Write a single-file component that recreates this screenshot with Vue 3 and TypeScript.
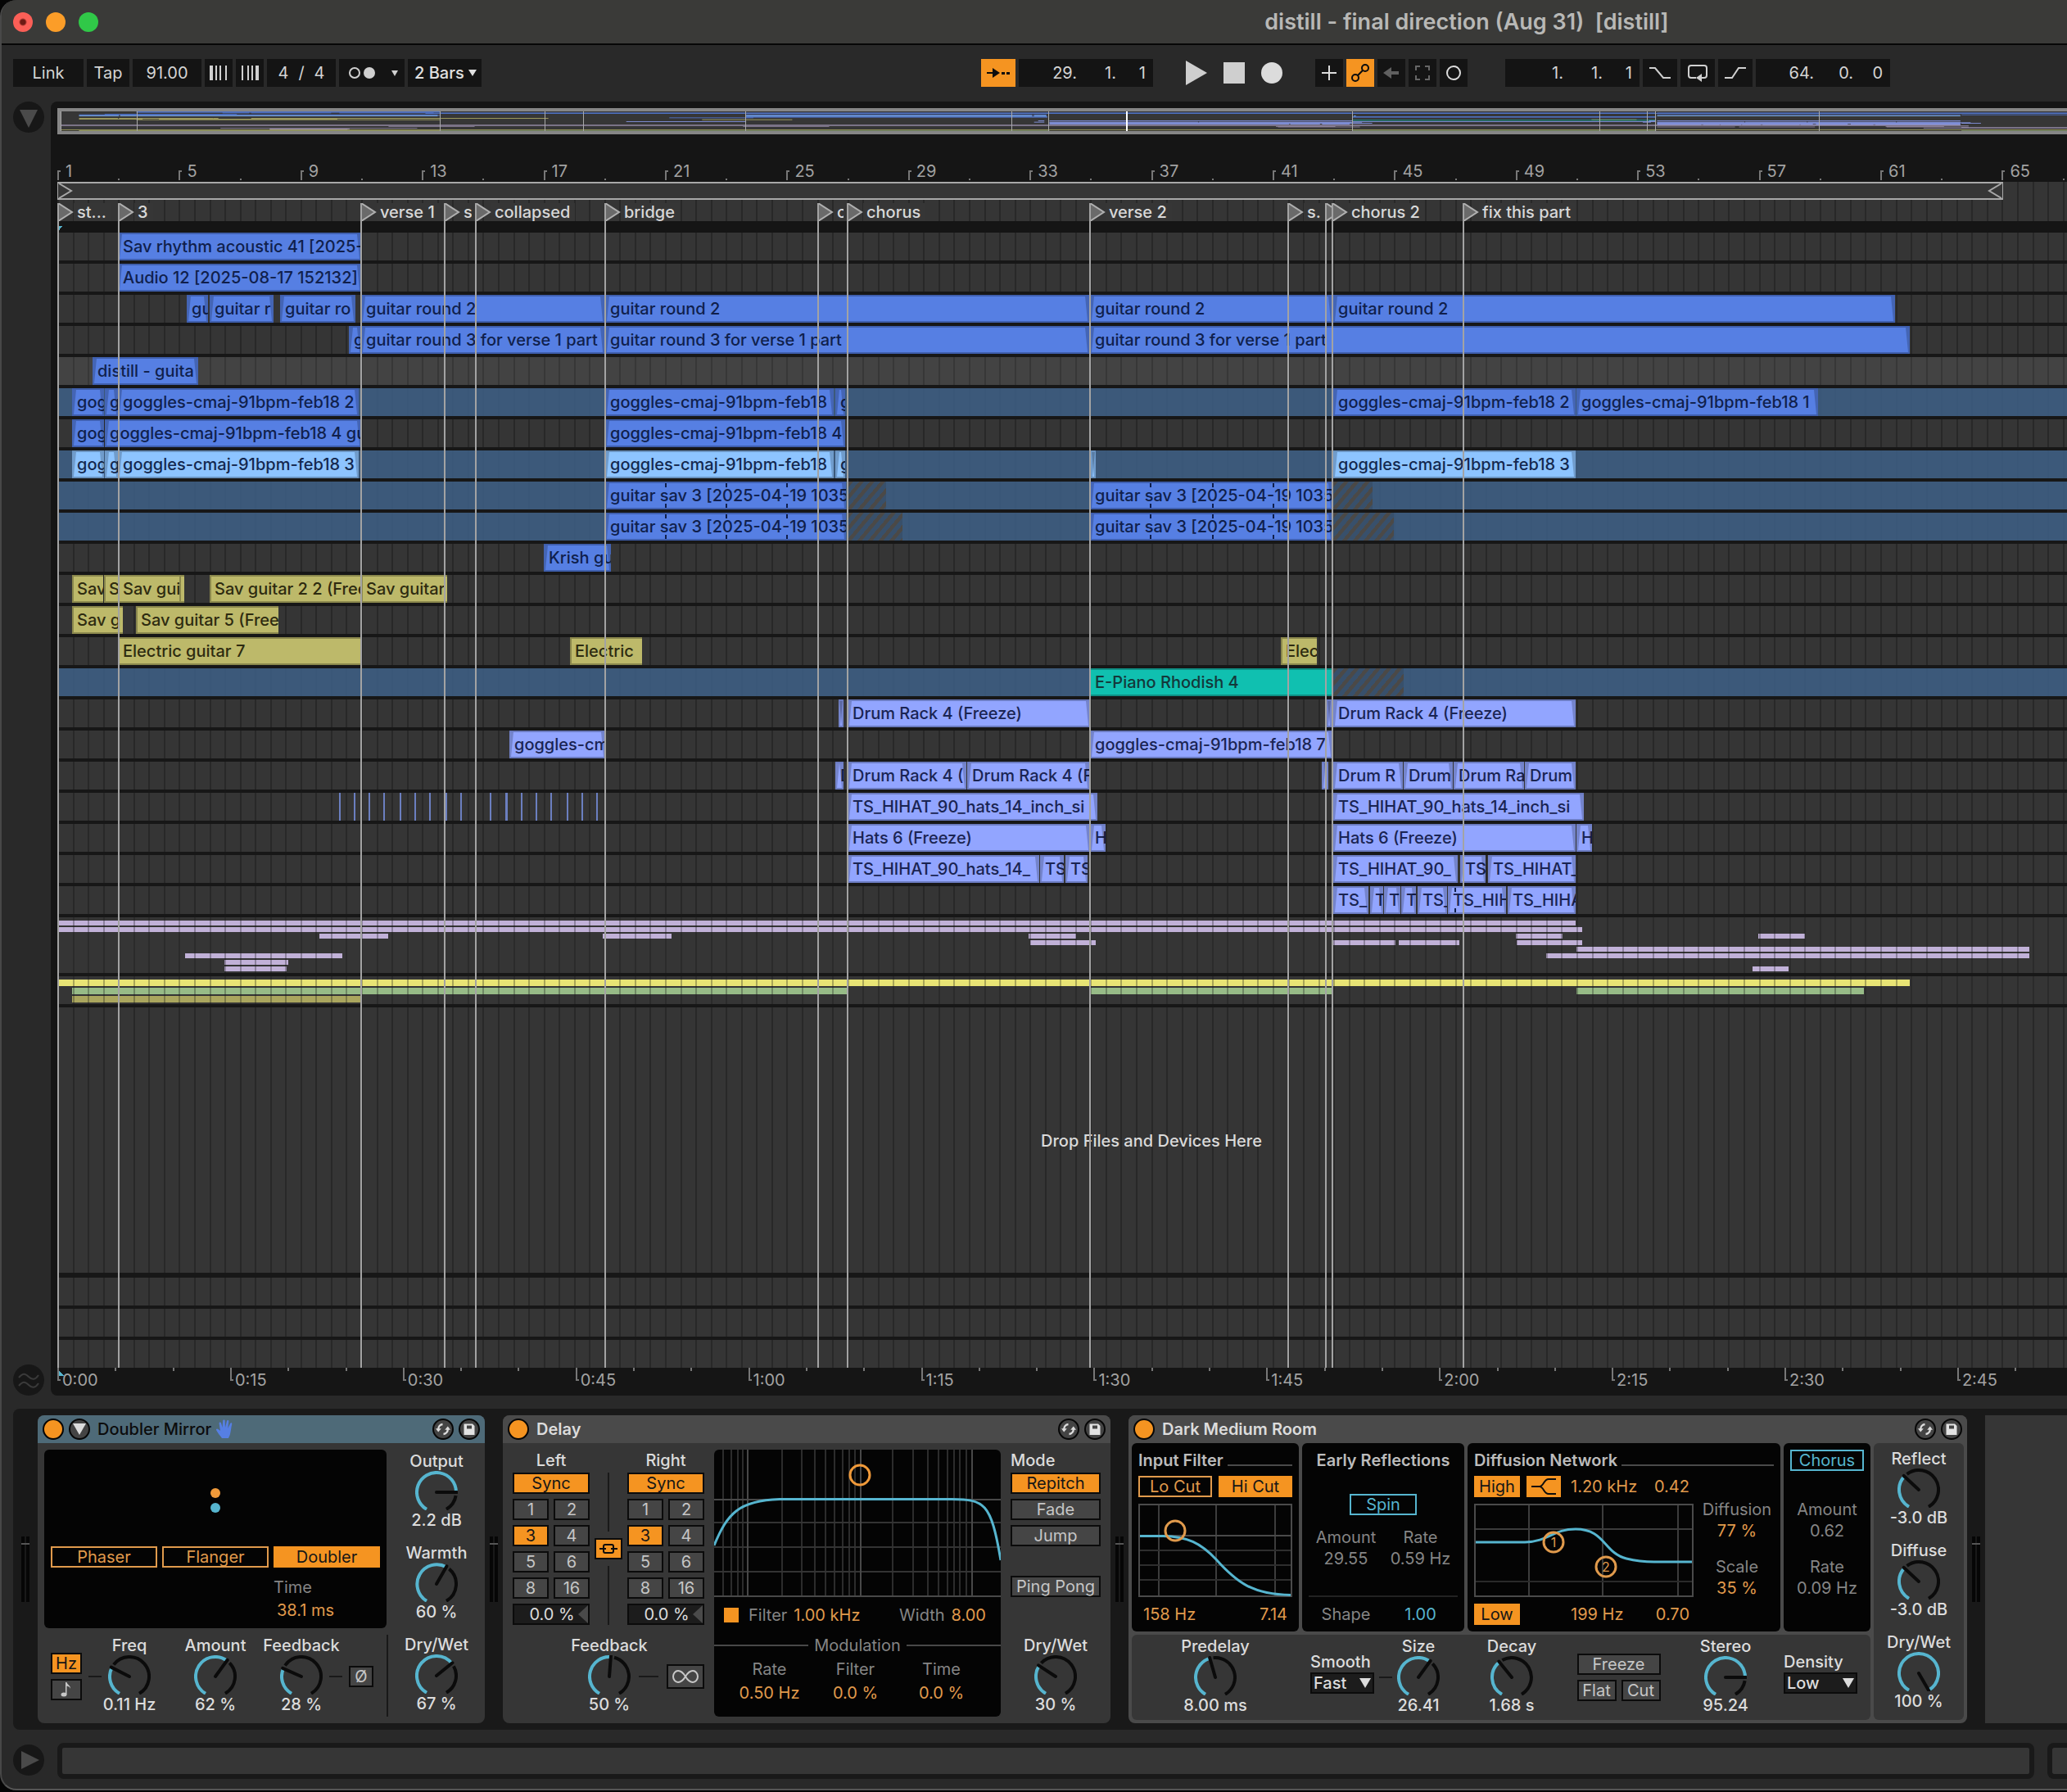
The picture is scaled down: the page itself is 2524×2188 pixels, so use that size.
<script setup lang="ts">
import { h } from 'vue'

type Tone = 'blue' | 'sky' | 'olive' | 'teal' | 'lilac'
type Clip = [start: number, end: number, name: string]
interface Lane {
  tone: Tone
  kind?: 'selected' | 'hover'
  clips: Clip[]
  hatches?: [number, number][]
  warps?: number[]
  hits?: number[]
}
interface Strip {
  start: number
  end: number
  row: number
  color: string
}

/* Timeline positions are canvas units; the visible span starts at ORIGIN. */
const ORIGIN = 70
const SPAN = 2454
const BAR = 37.1
const OVERVIEW_SPAN = 1958

const at = (x: number): string => `${((x - ORIGIN) / SPAN) * 100}%`
const span = (a: number, b: number): string => `${((b - a) / SPAN) * 100}%`
const barAt = (bar: number): string => at(ORIGIN + (bar - 1) * BAR)

const gridLines = Array.from({ length: 133 }, (_, i) => at(ORIGIN + (i * BAR) / 2))
const bars = Array.from({ length: 34 }, (_, i) => ({ bar: i * 2 + 1, major: i % 2 === 0 }))
const seconds = Array.from({ length: 35 }, (_, i) => {
  const s = i * 5
  return {
    left: at(ORIGIN + i * 70.3),
    major: i % 3 === 0,
    text: `${Math.floor(s / 60)}:${String(s % 60).padStart(2, '0')}`,
  }
})

const locators = [
  { x: 70, name: 'st...', end: 144 },
  { x: 144, name: '3', end: 440 },
  { x: 440, name: 'verse 1', end: 542 },
  { x: 542, name: 's', end: 576 },
  { x: 580, name: 'collapsed', end: 738 },
  { x: 738, name: 'bridge', end: 998 },
  { x: 998, name: 'c', end: 1030 },
  { x: 1034, name: 'chorus', end: 1330 },
  { x: 1330, name: 'verse 2', end: 1572 },
  { x: 1572, name: 's.', end: 1618 },
  { x: 1618, name: '', end: 1626 },
  { x: 1626, name: 'chorus 2', end: 1786 },
  { x: 1786, name: 'fix this part', end: 2400 },
]

const G = 'goggles-cmaj-91bpm-feb18'
const R3 = 'guitar round 3 for verse 1 part'
const HAT = 'TS_HIHAT_90_hats_14_inch_si'
const lanes: Lane[] = [
  { tone: 'blue', clips: [[144, 441, 'Sav rhythm acoustic 41 [2025-']] },
  { tone: 'blue', clips: [[144, 441, 'Audio 12 [2025-08-17 152132]']] },
  {
    tone: 'blue',
    clips: [
      [228, 254, 'gu'], [256, 334, 'guitar r'], [342, 434, 'guitar ro'], [441, 738, 'guitar round 2'],
      [739, 1330, 'guitar round 2'], [1331, 1627, 'guitar round 2'], [1628, 2314, 'guitar round 2'],
    ],
  },
  { tone: 'blue', clips: [[426, 441, 'g'], [441, 738, R3], [739, 1330, R3], [1331, 2332, R3]] },
  { tone: 'blue', kind: 'hover', clips: [[113, 242, 'distill - guita']] },
  {
    tone: 'blue', kind: 'selected',
    clips: [
      [88, 127, 'gog'], [128, 144, 'g'], [144, 438, G + ' 2'], [739, 1018, G], [1020, 1032, 'g'],
      [1628, 1924, G + ' 2'], [1925, 2220, G + ' 1'],
    ],
  },
  { tone: 'blue', clips: [[88, 127, 'gog'], [128, 441, G + ' 4 gu'], [739, 1032, G + ' 4']] },
  {
    tone: 'sky', kind: 'selected',
    clips: [
      [88, 127, 'gog'], [128, 144, 'g'], [144, 438, G + ' 3'], [739, 1018, G], [1020, 1032, 'g'],
      [1332, 1334, ''], [1628, 1924, G + ' 3'],
    ],
  },
  {
    tone: 'blue', kind: 'selected',
    clips: [[739, 1033, 'guitar sav 3 [2025-04-19 1035'], [1331, 1627, 'guitar sav 3 [2025-04-19 10350']],
    hatches: [[1036, 1082], [1628, 1676]],
    warps: [812, 886, 960, 1404, 1480, 1554],
  },
  {
    tone: 'blue', kind: 'selected',
    clips: [[739, 1033, 'guitar sav 3 [2025-04-19 1035'], [1331, 1627, 'guitar sav 3 [2025-04-19 10350']],
    hatches: [[1036, 1102], [1628, 1702]],
    warps: [812, 886, 960, 1404, 1480, 1554],
  },
  { tone: 'blue', clips: [[664, 746, 'Krish gu']] },
  {
    tone: 'olive',
    clips: [
      [88, 126, 'Sav'], [127, 144, 'S'], [144, 219, 'Sav gui'], [219, 224, ''],
      [256, 441, 'Sav guitar 2 2 (Free'], [441, 546, 'Sav guitar'],
    ],
  },
  { tone: 'olive', clips: [[88, 150, 'Sav g'], [166, 340, 'Sav guitar 5 (Free']] },
  { tone: 'olive', clips: [[144, 441, 'Electric guitar 7'], [696, 784, 'Electric'], [1564, 1608, 'Elec']] },
  { tone: 'teal', kind: 'selected', clips: [[1331, 1627, 'E-Piano Rhodish 4']], hatches: [[1628, 1714]] },
  {
    tone: 'lilac',
    clips: [[1024, 1030, ''], [1035, 1331, 'Drum Rack 4 (Freeze)'], [1620, 1626, ''], [1628, 1924, 'Drum Rack 4 (Freeze)']],
  },
  { tone: 'lilac', clips: [[622, 739, 'goggles-cm'], [1331, 1627, G + ' 7']] },
  {
    tone: 'lilac',
    clips: [
      [1020, 1030, 'D'], [1035, 1180, 'Drum Rack 4 ('], [1181, 1330, 'Drum Rack 4 (F'], [1614, 1622, ''],
      [1628, 1713, 'Drum R'], [1714, 1774, 'Drum'], [1775, 1861, 'Drum Ra'], [1862, 1924, 'Drum'],
    ],
  },
  {
    tone: 'lilac',
    clips: [[1035, 1340, HAT], [1628, 1934, HAT]],
    hits: [414, 432, 450, 468, 488, 506, 524, 544, 562, 598, 617, 618, 636, 654, 672, 692, 710, 728],
  },
  {
    tone: 'lilac',
    clips: [[1035, 1331, 'Hats 6 (Freeze)'], [1331, 1350, 'H'], [1628, 1924, 'Hats 6 (Freeze)'], [1925, 1944, 'H']],
  },
  {
    tone: 'lilac',
    clips: [
      [1035, 1269, 'TS_HIHAT_90_hats_14_'], [1270, 1299, 'TS'], [1301, 1328, 'TS'],
      [1628, 1780, 'TS_HIHAT_90_'], [1783, 1814, 'TS'], [1817, 1924, 'TS_HIHAT_'],
    ],
  },
  {
    tone: 'lilac',
    clips: [
      [1628, 1671, 'TS_'], [1673, 1689, 'T'], [1690, 1710, 'T'], [1711, 1729, 'T'], [1731, 1767, 'TS_'],
      [1768, 1839, 'TS_HIH'], [1841, 1924, 'TS_HIHA'],
    ],
    warps: [1776],
  },
]

const P = '#c1b1d8'
const groupStrips: Strip[] = (
  [
    [70, 1924, 0], [70, 1932, 1], [390, 474, 2], [736, 820, 2], [1256, 1314, 2], [1851, 1908, 2], [2147, 2204, 2],
    [1258, 1338, 3], [1628, 1704, 3], [1708, 1782, 3], [1852, 1932, 3], [1925, 2478, 4], [226, 418, 5],
    [1888, 2478, 5], [274, 352, 6], [274, 350, 7], [2140, 2184, 7],
  ] as [number, number, number][]
).map(([start, end, row]) => ({ start, end, row, color: P }))
const keyStrips: Strip[] = [
  { start: 70, end: 2332, row: 0, color: '#e8e475' },
  { start: 88, end: 1035, row: 1, color: '#97bb87' },
  { start: 1331, end: 1627, row: 1, color: '#97bb87' },
  { start: 1925, end: 2276, row: 1, color: '#97bb87' },
  { start: 88, end: 441, row: 2, color: '#aaa65e' },
]

const toneFill: Record<Tone, string> = {
  blue: '#567fe3', sky: '#8dc4ff', olive: '#bdb96a', teal: '#10c0b0', lilac: '#92a5ff',
}
const overviewRects = [
  ...lanes.flatMap((lane, i) =>
    lane.clips.map(([a, b]) => ({ x: a - ORIGIN, w: b - a, y: i * 0.75, hgt: 0.75, fill: toneFill[lane.tone] })),
  ),
  ...groupStrips.map((s) => ({ x: s.start - ORIGIN, w: s.end - s.start, y: 16.5 + s.row * 0.75, hgt: 0.5, fill: s.color })),
  ...keyStrips.map((s) => ({ x: s.start - ORIGIN, w: s.end - s.start, y: 22.5 + s.row * 0.5, hgt: 0.5, fill: s.color })),
]
const overviewLine = (x: number): string => `${((x - ORIGIN) / OVERVIEW_SPAN) * 100}%`

const polar = (deg: number, r: number): string => {
  const t = (deg * Math.PI) / 180
  return `${(26 - r * Math.sin(t)).toFixed(2)} ${(26 + r * Math.cos(t)).toFixed(2)}`
}
const arc = (from: number, to: number): string =>
  `M${polar(from, 24)}A24 24 0 ${to - from > 180 ? 1 : 0} 1 ${polar(to, 24)}`

const Dial = (p: { label: string; value: string; amount: number }) => {
  const angle = 30 + 300 * p.amount
  return h('label', { class: 'dial' }, [
    h('span', { class: 'dial-label' }, p.label),
    h('span', { class: 'dial-face' }, [
      h('svg', { viewBox: '0 0 52 48', width: 52, height: 48, fill: 'none', 'stroke-width': 4 }, [
        angle < 320 ? h('path', { d: arc(angle + 10, 330), stroke: '#0b0b0b' }) : null,
        h('path', { d: arc(30, angle), stroke: '#56b5cf' }),
        h('path', { d: `M26 26L${polar(angle, 25)}`, stroke: '#0b0b0b', 'stroke-linecap': 'round' }),
      ]),
      h('input', { type: 'range', min: 0, max: 100, value: p.amount * 100 }),
    ]),
    h('span', { class: 'dial-value' }, p.value),
  ])
}
Dial.props = ['label', 'value', 'amount']

const HeadIcons = () =>
  h('span', { class: 'head-icons' }, [
    h('button', { type: 'button', 'aria-label': 'Hot swap' }, [
      h('svg', { viewBox: '0 0 26 26', width: 26, height: 26, fill: 'none' }, [
        h('circle', { cx: 13, cy: 13, r: 12, fill: '#444', stroke: '#060606', 'stroke-width': 2 }),
        h('path', { d: 'M12.500 7A6 6 0 0 0 7.200 13M13.500 19A6 6 0 0 0 18.800 13', stroke: '#dcdcdc', 'stroke-width': 2.4 }),
        h('path', { d: 'M4 12.200h6.800L7.200 16.600zM22 13.800h-6.800L18.800 9.400z', fill: '#dcdcdc' }),
      ]),
    ]),
    h('button', { type: 'button', 'aria-label': 'Save preset' }, [
      h('svg', { viewBox: '0 0 26 26', width: 26, height: 26 }, [
        h('circle', { cx: 13, cy: 13, r: 12, fill: '#444', stroke: '#060606', 'stroke-width': 2 }),
        h('path', { d: 'M6.500 6.500h10.500l2.500 2.500v11h-13zM10 8.400v4h6v-4z', fill: '#e2e2e2', 'fill-rule': 'evenodd' }),
      ]),
    ]),
  ])

const divisions = ['1', '2', '3', '4', '5', '6', '8', '16']
const delayGridFaint = [11, 21, 29, 35, 83, 107, 123, 136, 147, 157, 165, 172, 218, 243, 261, 274, 285, 293, 300, 308]
const delayGridStrong = [41, 179, 315]
</script>

<template>
  <div class="window">
    <header class="titlebar">
      <div class="lights">
        <button type="button" class="light red" aria-label="Close"></button>
        <button type="button" class="light amber" aria-label="Minimise"></button>
        <button type="button" class="light green" aria-label="Zoom"></button>
      </div>
      <span class="grow-left"></span>
      <h1>distill - final direction (Aug 31)&nbsp; [distill]</h1>
      <span class="grow-right"></span>
    </header>

    <nav class="toolbar">
      <div class="group">
        <button type="button" class="cell w86">Link</button>
        <button type="button" class="cell w52">Tap</button>
        <input class="cell w84" value="91.00" aria-label="Tempo" />
        <button type="button" class="cell w34" aria-label="Nudge down">
          <svg width="24" height="20" viewBox="0 0 24 20" fill="#d0d0d0"><path d="M1 1h4v18H1zM8 1h2v18H8zM13 1h2v18h-2zM20 1h2v18h-2z" /></svg>
        </button>
        <button type="button" class="cell w34" aria-label="Nudge up">
          <svg width="24" height="20" viewBox="0 0 24 20" fill="#d0d0d0"><path d="M2 1h2v18H2zM9 1h2v18H9zM14 1h2v18h-2zM19 1h4v18h-4z" /></svg>
        </button>
        <div class="cell w84 signature">
          <input value="4" aria-label="Beats per bar" /><span>/</span><input value="4" aria-label="Beat unit" />
        </div>
        <button type="button" class="cell w80" aria-label="Metronome">
          <svg width="64" height="20" viewBox="0 0 64 20"><circle cx="11" cy="10" r="6" fill="none" stroke="#d0d0d0" stroke-width="2" /><circle cx="29" cy="10" r="7" fill="#d0d0d0" /><path d="M56 7h8l-4 7z" fill="#d0d0d0" /></svg>
        </button>
        <div class="cell w90 pick">
          <select aria-label="Quantization"><option>2 Bars</option></select>
          <svg width="10" height="8" viewBox="0 0 10 8"><path d="M0 0h10L5 8z" fill="#e0e0e0" /></svg>
        </div>
      </div>
      <span class="gap-a"></span>
      <div class="group">
        <button type="button" class="cell w42 on" aria-label="Follow">
          <svg width="32" height="20" viewBox="0 0 32 20" fill="#0d0d0d"><path d="M2 9h7V4l9 6-9 6v-5H2zM20 9h4v3h-4zM26 9h4v3h-4z" /></svg>
        </button>
        <div class="cell w164 position">
          <input value="29." aria-label="Bar" /><input value="1." aria-label="Beat" /><input value="1" aria-label="Sixteenth" />
        </div>
      </div>
      <div class="group transport">
        <button type="button" aria-label="Play"><svg width="26" height="30" viewBox="0 0 26 30"><path d="M0 0l26 15L0 30z" fill="#cfcfcf" /></svg></button>
        <button type="button" aria-label="Stop"><svg width="26" height="26" viewBox="0 0 26 26"><path d="M0 0h26v26H0z" fill="#cfcfcf" /></svg></button>
        <button type="button" aria-label="Record"><svg width="26" height="26" viewBox="0 0 26 26"><circle cx="13" cy="13" r="13" fill="#dcdcdc" /></svg></button>
      </div>
      <div class="group">
        <button type="button" class="cell w34" aria-label="Overdub"><svg width="20" height="20" viewBox="0 0 20 20"><path d="M10 1v18M1 10h18" stroke="#dcdcdc" stroke-width="2" /></svg></button>
        <button type="button" class="cell w34 on" aria-label="Automation arm">
          <svg width="26" height="26" viewBox="0 0 26 26" fill="none" stroke="#0d0d0d" stroke-width="2"><circle cx="7" cy="19" r="4" /><circle cx="19" cy="7" r="4" /><path d="M9.800 16.200L16.200 9.800" /></svg>
        </button>
        <button type="button" class="cell w34" aria-label="Re-enable automation"><svg width="20" height="16" viewBox="0 0 20 16" fill="#606060"><path d="M0 8l10-7v5h9v4h-9v5z" /></svg></button>
        <button type="button" class="cell w34" aria-label="Capture"><svg width="20" height="20" viewBox="0 0 20 20" fill="none" stroke="#666" stroke-width="2"><path d="M2 7V2h5M13 2h5v5M18 13v5h-5M7 18H2v-5" /></svg></button>
        <button type="button" class="cell w34" aria-label="Session record"><svg width="20" height="20" viewBox="0 0 20 20"><circle cx="10" cy="10" r="8" fill="none" stroke="#dcdcdc" stroke-width="2" /></svg></button>
      </div>
      <div class="group last">
        <div class="cell w164 position">
          <input value="1." aria-label="Loop bar" /><input value="1." aria-label="Loop beat" /><input value="1" aria-label="Loop sixteenth" />
        </div>
        <button type="button" class="cell w42" aria-label="Punch in"><svg width="28" height="20" viewBox="0 0 28 20"><path d="M1 4h7l10 12h9" fill="none" stroke="#d0d0d0" stroke-width="2" /></svg></button>
        <button type="button" class="cell w42" aria-label="Loop">
          <svg width="28" height="24" viewBox="0 0 28 24" fill="none" stroke="#d0d0d0" stroke-width="2"><path d="M12 18H6a3 3 0 0 1-3-3V6a3 3 0 0 1 3-3h16a3 3 0 0 1 3 3v9a3 3 0 0 1-3 3h-3" /><path d="M19 13v10l-7-5z" fill="#d0d0d0" stroke="none" /></svg>
        </button>
        <button type="button" class="cell w42" aria-label="Punch out"><svg width="28" height="20" viewBox="0 0 28 20"><path d="M1 16h9L18 4h9" fill="none" stroke="#d0d0d0" stroke-width="2" /></svg></button>
        <div class="cell w164 position">
          <input value="64." aria-label="Length bars" /><input value="0." aria-label="Length beats" /><input value="0" aria-label="Length sixteenths" />
        </div>
      </div>
      <span class="gap-b"></span>
    </nav>

    <main class="arrange">
      <div class="gutter">
        <button type="button" class="knob" aria-label="Show browser"><svg width="38" height="38" viewBox="0 0 38 38"><path d="M8 10h22L19 32z" fill="#4a4a4a" /></svg></button>
        <button type="button" class="knob" aria-label="Groove pool">
          <svg width="38" height="38" viewBox="0 0 38 38" fill="none" stroke="#3a3a3a" stroke-width="2"><path d="M7 16c5-6 8-5 12-1s8 4 12-2M7 26c5-6 8-5 12-1s8 4 12-2" /></svg>
        </button>
      </div>

      <section class="panel">
        <div class="overview">
          <svg viewBox="0 0 1958 24" preserveAspectRatio="none">
            <rect v-for="(r, i) in overviewRects" :key="i" :x="r.x" :y="r.y" :width="r.w" :height="r.hgt" :fill="r.fill" />
          </svg>
          <i v-for="l in locators" :key="l.x" class="mini" :style="{ left: overviewLine(l.x) }"></i>
          <i class="mini playhead" :style="{ left: overviewLine(1110) }"></i>
        </div>

        <div class="ruler">
          <template v-for="b in bars" :key="b.bar">
            <span v-if="b.major" class="tick major" :style="{ left: barAt(b.bar) }">{{ b.bar }}</span>
            <span v-else class="tick" :style="{ left: barAt(b.bar) }"></span>
          </template>
        </div>

        <div class="canvas">
          <i v-for="(g, i) in gridLines" :key="i" class="grid" :style="{ left: g }"></i>

          <div class="loop-row">
            <div class="loop" :style="{ width: span(70, 2446) }">
              <svg width="18" height="18" viewBox="0 0 18 18" fill="none" stroke="#a8a8a8" stroke-width="2"><path d="M1 0l15 9L1 18" /></svg>
              <svg width="18" height="18" viewBox="0 0 18 18" fill="none" stroke="#a8a8a8" stroke-width="2"><path d="M17 0L2 9l15 9" /></svg>
            </div>
          </div>
          <div class="locator-row">
            <div v-for="l in locators" :key="l.x" class="locator" :style="{ left: at(l.x), maxWidth: span(l.x, l.end) }">
              <svg width="20" height="22" viewBox="0 0 20 22"><path d="M1 0l17 11L1 22z" fill="#6a6a6a" stroke="#b0b0b0" stroke-width="2" /></svg>
              <span v-if="l.name">{{ l.name }}</span>
            </div>
          </div>
          <div class="scrub"></div>

          <div v-for="(lane, i) in lanes" :key="i" class="lane" :class="[lane.tone, lane.kind]">
            <div v-for="(c, j) in lane.clips" :key="j" class="clip" :style="{ left: at(c[0]), width: span(c[0], c[1]) }">{{ c[2] }}</div>
            <i v-for="(t, j) in lane.hatches" :key="'h' + j" class="hatch" :style="{ left: at(t[0]), width: span(t[0], t[1]) }"></i>
            <i v-for="w in lane.warps" :key="'w' + w" class="warp" :style="{ left: at(w) }"></i>
            <i v-for="x in lane.hits" :key="'x' + x" class="hit" :style="{ left: at(x) }"></i>
          </div>

          <div class="lane strips group-lane">
            <i v-for="(s, j) in groupStrips" :key="j" class="strip" :style="{ left: at(s.start), width: span(s.start, s.end), top: s.row * 8 + 4 + 'px', background: s.color }"></i>
            <i v-for="(g, j) in gridLines" :key="'g' + j" class="veil" :style="{ left: g }"></i>
          </div>
          <div class="lane strips key-lane">
            <i v-for="(s, j) in keyStrips" :key="j" class="strip" :style="{ left: at(s.start), width: span(s.start, s.end), top: s.row * 10 + 4 + 'px', background: s.color }"></i>
            <i v-for="(g, j) in gridLines" :key="'g' + j" class="veil" :style="{ left: g }"></i>
          </div>
          <div class="drop"><p :style="{ left: at(1406) }">Drop Files and Devices Here</p></div>
          <div class="lane"></div>
          <div class="lane"></div>
          <div class="lane final"></div>

          <i v-for="l in locators" :key="'l' + l.x" class="marker" :style="{ left: at(l.x) }"></i>
        </div>

        <div class="times">
          <template v-for="s in seconds" :key="s.text">
            <span v-if="s.major" class="second major" :style="{ left: s.left }">{{ s.text }}</span>
            <span v-else class="second" :style="{ left: s.left }"></span>
          </template>
        </div>
      </section>
    </main>

    <section class="rack">
      <i class="meter first"></i>

      <article class="device doubler">
        <header class="head mapped">
          <button type="button" class="power" aria-label="Device on"></button>
          <button type="button" class="fold" aria-label="Fold"><svg width="16" height="14" viewBox="0 0 16 14"><path d="M0 0h16L8 14z" fill="#dcdcdc" /></svg></button>
          <h2>Doubler Mirror</h2>
          <svg class="hand" width="22" height="24" viewBox="0 0 22 24" fill="#567fe3"><path d="M7 23c-2-3-5-6-7-10-.4-1.600 1.400-2 2.400-1L5 14 3.600 5c-.2-1.800 2-2 2.400-.4L7.600 10 8.200 1.600C8.400 0 10.600 0 10.700 1.600L11 10l2-8c.4-1.500 2.500-1.100 2.300.5L14.200 11l3-6c.8-1.300 2.500-.4 2 1-1 4-1.200 8-2.200 12-.5 2-1.500 3.500-2 5z" /></svg>
          <HeadIcons />
        </header>
        <div class="doubler-body">
          <div class="doubler-main">
            <div class="display xy">
              <svg class="dots" width="12" height="30" viewBox="0 0 12 30"><circle cx="6" cy="6" r="6" fill="#f09a3a" /><circle cx="6" cy="24" r="6" fill="#56b5cf" /></svg>
              <div class="modes">
                <button type="button" class="btn line">Phaser</button>
                <button type="button" class="btn line">Flanger</button>
                <button type="button" class="btn solid">Doubler</button>
              </div>
              <div class="time-field"><span class="dim">Time</span><span class="amber-text">38.1 ms</span></div>
            </div>
            <div class="doubler-row">
              <div class="cluster">
                <div class="stack">
                  <button type="button" class="btn on">Hz</button>
                  <button type="button" class="btn" aria-label="Sync rate"><svg width="14" height="18" viewBox="0 0 14 18" fill="#c8c8c8"><ellipse cx="4" cy="15" rx="3.500" ry="2.500" /><path d="M6 0h1.500c.5 3 5 4 4.500 8-.6-2-2.600-3-4.500-3.400V15H6z" /></svg></button>
                </div>
                <i class="wire"></i>
                <Dial label="Freq" value="0.11 Hz" :amount="0.29" />
              </div>
              <Dial label="Amount" value="62 %" :amount="0.62" />
              <div class="cluster">
                <Dial label="Feedback" value="28 %" :amount="0.28" />
                <i class="wire"></i>
                <button type="button" class="btn phase">Ø</button>
              </div>
            </div>
          </div>
          <div class="doubler-side">
            <div><Dial label="Output" value="2.2 dB" :amount="0.8" /></div>
            <div><Dial label="Warmth" value="60 %" :amount="0.6" /></div>
            <div class="split"><Dial label="Dry/Wet" value="67 %" :amount="0.67" /></div>
          </div>
        </div>
      </article>

      <i class="meter"></i>

      <article class="device delay">
        <header class="head">
          <button type="button" class="power" aria-label="Device on"></button>
          <h2>Delay</h2>
          <HeadIcons />
        </header>
        <div class="delay-body">
          <div class="delay-times">
            <div class="sides">
              <div class="side">
                <span class="cap">Left</span>
                <button type="button" class="btn on">Sync</button>
                <div class="divisions"><button v-for="d in divisions" :key="d" type="button" class="btn" :class="{ on: d === '3' }">{{ d }}</button></div>
                <div class="offset"><input value="0.0 %" aria-label="Left offset" /><svg width="12" height="22" viewBox="0 0 12 22"><path d="M12 0v22L0 11z" fill="#4a4a4a" /></svg></div>
              </div>
              <div class="link-col">
                <i></i>
                <button type="button" class="btn on" aria-label="Link channels"><svg width="22" height="14" viewBox="0 0 22 14" fill="none" stroke="#0d0d0d" stroke-width="2"><rect x="5" y="2" width="12" height="10" rx="2" /><path d="M0 7h8M14 7h8" /></svg></button>
                <i></i>
              </div>
              <div class="side">
                <span class="cap">Right</span>
                <button type="button" class="btn on">Sync</button>
                <div class="divisions"><button v-for="d in divisions" :key="d" type="button" class="btn" :class="{ on: d === '3' }">{{ d }}</button></div>
                <div class="offset"><input value="0.0 %" aria-label="Right offset" /><svg width="12" height="22" viewBox="0 0 12 22"><path d="M12 0v22L0 11z" fill="#4a4a4a" /></svg></div>
              </div>
            </div>
            <div class="delay-feedback">
              <Dial label="Feedback" value="50 %" :amount="0.515" />
              <i class="wire long"></i>
              <button type="button" class="btn freeze" aria-label="Freeze"><svg width="32" height="18" viewBox="0 0 32 18" fill="none" stroke="#c8c8c8" stroke-width="2"><path d="M16 9c-3-5-6-7-9-7a6 7 0 0 0 0 14c3 0 6-2 9-7s6-7 9-7a6 7 0 0 1 0 14c-3 0-6-2-9-7z" /></svg></button>
            </div>
          </div>

          <div class="display filter">
            <svg width="350" height="180" viewBox="0 0 350 180" fill="none">
              <path v-for="x in delayGridFaint" :key="x" :d="`M${x} 0V180`" stroke="#2c2c2c" stroke-width="2" />
              <path d="M0 89h350M0 119h350M0 149h350" stroke="#333" stroke-width="2" />
              <path v-for="x in delayGridStrong" :key="x" :d="`M${x} 0V180`" stroke="#484848" stroke-width="2" />
              <path d="M0 61h350M0 179h350" stroke="#484848" stroke-width="2" />
              <path d="M0 117C16 78 30 62 80 60.500H290C330 61 338 64 350 135" stroke="#56b5cf" stroke-width="3" />
              <circle cx="178" cy="31" r="12" stroke="#f09a3a" stroke-width="3" />
            </svg>
            <div class="filter-row">
              <label><input type="checkbox" checked /><span>Filter</span></label>
              <b>1.00 kHz</b><span class="width">Width</span><b>8.00</b>
            </div>
            <div class="rule"><i></i><span>Modulation</span><i></i></div>
            <div class="mods">
              <span>Rate</span><span>Filter</span><span>Time</span>
              <b>0.50 Hz</b><b>0.0 %</b><b>0.0 %</b>
            </div>
          </div>

          <div class="delay-mode">
            <span class="cap start">Mode</span>
            <button type="button" class="btn on">Repitch</button>
            <button type="button" class="btn">Fade</button>
            <button type="button" class="btn">Jump</button>
            <button type="button" class="btn pong">Ping Pong</button>
            <div class="mode-dial"><Dial label="Dry/Wet" value="30 %" :amount="0.31" /></div>
          </div>
        </div>
      </article>

      <i class="meter"></i>

      <article class="device reverb">
        <header class="head">
          <button type="button" class="power" aria-label="Device on"></button>
          <h2>Dark Medium Room</h2>
          <HeadIcons />
        </header>
        <div class="reverb-body">
          <div class="reverb-main">
            <div class="reverb-grid panels">
              <section class="display block">
                <h3>Input Filter<i></i></h3>
                <div class="pair"><button type="button" class="btn line">Lo Cut</button><button type="button" class="btn solid">Hi Cut</button></div>
                <svg width="188" height="114" viewBox="0 0 188 114" fill="none">
                  <path d="M25 0v114M95 0v114M167 0v114" stroke="#3c3c3c" stroke-width="2" />
                  <path d="M0 39h188" stroke="#4a4a4a" stroke-width="2" />
                  <path d="M0 57h188M0 75h188M0 93h188" stroke="#2e2e2e" stroke-width="2" />
                  <rect x="1" y="1" width="186" height="112" stroke="#4a4a4a" stroke-width="2" />
                  <path d="M2 39.500H30C60 40 76 48 95 68C120 96 140 111 186 111.500" stroke="#56b5cf" stroke-width="3" />
                  <circle cx="45" cy="33" r="12" stroke="#e09a4c" stroke-width="3" />
                </svg>
                <div class="values"><b>158 Hz</b><b>7.14</b></div>
              </section>
              <section class="display block early">
                <h3>Early Reflections</h3>
                <button type="button" class="btn cyan">Spin</button>
                <div class="two"><span>Amount</span><span>Rate</span><span>29.55</span><span>0.59 Hz</span></div>
                <div class="two shape"><span>Shape</span><span class="cyan-text">1.00</span></div>
              </section>
              <section class="display block">
                <h3>Diffusion Network<i></i></h3>
                <div class="diffusion">
                  <div class="diffusion-left">
                    <div class="bandrow">
                      <button type="button" class="btn solid w56">High</button>
                      <button type="button" class="btn solid w42" aria-label="Filter type"><svg width="30" height="20" viewBox="0 0 30 20" fill="none" stroke="#0d0d0d" stroke-width="2"><path d="M0 10h10c5 0 5-9 11-9h9M10 10c5 0 5 9 11 9h9" /></svg></button>
                      <b class="freq">1.20 kHz</b><b class="res">0.42</b>
                    </div>
                    <svg width="268" height="114" viewBox="0 0 268 114" fill="none">
                      <path d="M67 0v114M157 0v114M249 0v114" stroke="#3c3c3c" stroke-width="2" />
                      <path d="M0 31h268" stroke="#3c3c3c" stroke-width="2" />
                      <path d="M0 95h268" stroke="#2a2a2a" stroke-width="2" />
                      <rect x="1" y="1" width="266" height="112" stroke="#4a4a4a" stroke-width="2" />
                      <path d="M2 47H62C92 46 96 31 124 31C160 31 158 60 186 67C198 70 206 71 220 71H266" stroke="#56b5cf" stroke-width="3" />
                      <g stroke="#e09a4c" stroke-width="3"><circle cx="97" cy="47" r="12" /><circle cx="161" cy="77" r="12" /></g>
                      <g fill="#e09a4c" font-size="16" text-anchor="middle"><text x="97" y="53">1</text><text x="161" y="83">2</text></g>
                    </svg>
                    <div class="bandrow">
                      <button type="button" class="btn solid w56">Low</button>
                      <b class="freq low">199 Hz</b><b class="res">0.70</b>
                    </div>
                  </div>
                  <div class="pairs"><span>Diffusion</span><b>77 %</b><span class="next">Scale</span><b>35 %</b></div>
                </div>
              </section>
              <section class="display block chorus">
                <button type="button" class="btn cyan">Chorus</button>
                <div class="pairs"><span>Amount</span><span>0.62</span><span class="next">Rate</span><span>0.09 Hz</span></div>
              </section>
            </div>
            <div class="reverb-grid bottom">
              <div class="mid"><Dial label="Predelay" value="8.00 ms" :amount="0.447" /></div>
              <div class="smooth">
                <label class="choice"><span>Smooth</span>
                  <span class="pickbox w78"><select><option>Fast</option></select><svg width="14" height="12" viewBox="0 0 14 12"><path d="M0 0h14L7 12z" fill="#dcdcdc" /></svg></span>
                </label>
                <i class="wire"></i>
                <Dial label="Size" value="26.41" :amount="0.62" />
              </div>
              <div class="tail">
                <Dial label="Decay" value="1.68 s" :amount="0.37" />
                <div class="freezers"><button type="button" class="btn full">Freeze</button><button type="button" class="btn">Flat</button><button type="button" class="btn">Cut</button></div>
                <Dial label="Stereo" value="95.24" :amount="0.8" />
              </div>
              <label class="choice"><span>Density</span>
                <span class="pickbox w90"><select><option>Low</option></select><svg width="14" height="12" viewBox="0 0 14 12"><path d="M0 0h14L7 12z" fill="#dcdcdc" /></svg></span>
              </label>
            </div>
          </div>
          <div class="reverb-side">
            <Dial label="Reflect" value="-3.0 dB" :amount="0.343" />
            <Dial label="Diffuse" value="-3.0 dB" :amount="0.343" />
            <Dial label="Dry/Wet" value="100 %" :amount="1" />
          </div>
        </div>
      </article>

      <i class="meter"></i>
      <div class="empty"></div>
    </section>

    <footer class="status">
      <button type="button" class="knob" aria-label="Show detail view"><svg width="38" height="38" viewBox="0 0 38 38"><path d="M10 8l22 11-22 11z" fill="#4a4a4a" /></svg></button>
      <div class="infobar"></div>
      <div class="infobar tail-box"></div>
    </footer>
  </div>
</template>

<style>
html,
body {
  background: #050505;
}
:where(button, input, select) {
  appearance: none;
  margin: 0;
  padding: 0;
  border: 0;
  border-radius: 0;
  background: none;
  color: inherit;
  font: inherit;
  outline: 0;
}
</style>

<style scoped>
.window {
  box-sizing: border-box;
  overflow: hidden;
  background: #292929;
  border-left: 2px solid #484848;
  border-bottom: 2px solid #555;
  border-radius: 20px 0 0 20px;
  color: #d4d4d4;
  font: 400 20px/24px Inter, Roboto, 'Liberation Sans', sans-serif;
}
.window *,
.window :deep(*) {
  box-sizing: border-box;
}
h1,
h2,
h3,
p {
  margin: 0;
  font: inherit;
}
i {
  display: block;
}
svg {
  display: block;
  flex: none;
}

.titlebar {
  display: flex;
  align-items: center;
  height: 55px;
  padding-left: 14px;
  background: #3a3a38;
  border-bottom: 2px solid #060606;
}
.titlebar h1 {
  color: #b8b8b6;
  font-size: 27px;
  font-weight: 600;
  line-height: 32px;
  white-space: nowrap;
}
.lights {
  display: flex;
  gap: 16px;
}
.light {
  width: 24px;
  height: 24px;
  border-radius: 50%;
}
.light.red {
  background: radial-gradient(circle, #6e1a14 0 3px, #fb5f57 5px);
}
.light.amber {
  background: #fb9d28;
}
.light.green {
  background: #30c848;
}
.grow-left {
  flex: 1423;
}
.grow-right {
  flex: 486;
}

.toolbar {
  display: flex;
  height: 69px;
  padding: 17px 0 18px 14px;
}
.group {
  display: flex;
  gap: 4px;
}
.gap-a {
  flex: 305;
}
.gap-b {
  flex: 108;
}
.cell {
  display: flex;
  align-items: center;
  justify-content: center;
  height: 34px;
  background: #141414;
  text-align: center;
}
.cell.on {
  background: #f59421;
}
.w34 {
  width: 34px;
}
.w42 {
  width: 42px;
}
.w52 {
  width: 52px;
}
.w56 {
  width: 56px;
}
.w78 {
  width: 78px;
}
.w80 {
  width: 80px;
}
.w84 {
  width: 84px;
}
.w86 {
  width: 86px;
}
.w90 {
  width: 90px;
}
.w164 {
  width: 164px;
}
.signature input {
  width: 24px;
  text-align: center;
}
.signature span {
  width: 20px;
}
.pick {
  position: relative;
  justify-content: flex-start;
  padding-left: 8px;
  color: #e0e0e0;
  font-weight: 500;
}
.pick select {
  width: 82px;
}
.pick svg {
  position: absolute;
  right: 6px;
  pointer-events: none;
}
.position {
  justify-content: flex-end;
  padding-right: 9px;
}
.position input {
  width: 36px;
  text-align: right;
}
.position input:first-child,
.position input:nth-child(2) {
  width: 48px;
}
.transport {
  gap: 20px;
  align-items: center;
  height: 34px;
  margin: 0 40px;
}
.last {
  margin-left: 46px;
}

.arrange {
  display: flex;
}
.gutter {
  display: flex;
  flex-direction: column;
  justify-content: space-between;
  width: 60px;
  padding-left: 14px;
}
.knob {
  flex: none;
  width: 38px;
  height: 38px;
  border-radius: 50%;
  background: #171717;
}
.panel {
  flex: 1;
  min-width: 0;
  padding: 8px 0 0 8px;
  overflow: hidden;
  background: #151515;
  border-radius: 8px 0 0 8px;
}
.overview {
  position: relative;
  height: 32px;
  background: #363636;
  border: 4px solid #868686;
  border-right: 0;
}
.overview svg {
  width: 100%;
  height: 24px;
}
.mini {
  position: absolute;
  top: 0;
  width: 1px;
  height: 24px;
  background: #a9a9a9;
}
.playhead {
  width: 2px;
  background: #fff;
}
.ruler {
  position: relative;
  height: 58px;
}
.tick {
  position: absolute;
  bottom: 2px;
  height: 2px;
  width: 2px;
  background: #777;
}
.tick.major {
  height: 12px;
  width: 4px;
  padding-left: 10px;
  color: #a2a2a2;
  line-height: 2px;
  background: linear-gradient(#777, #777) 0 0 / 4px 2px no-repeat, linear-gradient(#777, #777) 0 0 / 2px 12px no-repeat;
}
.canvas {
  position: relative;
  background: #353535;
}
.grid {
  position: absolute;
  top: 0;
  bottom: 0;
  width: 2px;
  background: #282828;
}
.loop-row {
  position: relative;
  height: 22px;
}
.loop {
  display: flex;
  justify-content: space-between;
  height: 22px;
  background: #363636;
  border: 2px solid #a8a8a8;
  border-width: 2px 1px;
}
.locator-row {
  position: relative;
  height: 26px;
}
.locator {
  position: absolute;
  top: 4px;
  display: flex;
  height: 22px;
  overflow: hidden;
  color: #d8d8d8;
  font-weight: 500;
  line-height: 22px;
  white-space: nowrap;
}
.locator span {
  padding: 0 6px 0 4px;
  background: #363636;
}
.scrub {
  position: relative;
  height: 14px;
  background: linear-gradient(to bottom right, #56b5cf 50%, transparent 50%) 0 6px / 6px 8px no-repeat #151515;
}
.lane {
  position: relative;
  height: 38px;
  border-bottom: 4px solid #171717;
  overflow: hidden;
}
.lane.final {
  height: 34px;
  border-bottom: 0;
}
.lane.selected {
  background: rgba(62, 99, 140, 0.8);
}
.lane.hover {
  background: rgba(255, 255, 255, 0.07);
}
.clip {
  position: absolute;
  top: 0;
  height: 34px;
  padding-left: 6px;
  overflow: hidden;
  border: 0 solid;
  border-width: 2px 0;
  font-weight: 500;
  line-height: 31px;
  white-space: nowrap;
}
.clip::before,
.clip::after {
  content: '';
  position: absolute;
  top: 0;
  left: 0;
  width: 5px;
  height: 30px;
  background: rgba(0, 0, 0, 0.2);
  clip-path: polygon(0 0, 100% 0, 40% 100%, 0 100%);
}
.clip::after {
  left: auto;
  right: 0;
  clip-path: polygon(0 0, 100% 0, 100% 100%, 60% 100%);
}
.blue .clip {
  background: #567fe3;
  border-color: #3f5fae;
  color: #101f4c;
}
.sky .clip {
  background: #8dc4ff;
  border-color: #6a93c0;
  color: #14284e;
}
.olive .clip {
  background: #bdb96a;
  border-color: #8b884d;
  color: #2e2b10;
  box-shadow: inset 2px 0 #8b884d;
}
.teal .clip {
  background: #10c0b0;
  border-color: #0e8f84;
  color: #14383a;
}
.lilac .clip {
  background: #92a5ff;
  border-color: #6b7bc0;
  color: #1a2452;
}
.olive .clip::before,
.olive .clip::after,
.teal .clip::before,
.teal .clip::after {
  display: none;
}
.hatch {
  position: absolute;
  top: 0;
  height: 34px;
  background: repeating-linear-gradient(130deg, #4b4947 0 4px, #38506b 5px 10px);
}
.warp {
  position: absolute;
  top: 2px;
  width: 2px;
  height: 30px;
  background: linear-gradient(#101f4c 5px, transparent 5px 25px, #101f4c 25px);
}
.hit {
  position: absolute;
  top: 0;
  width: 2px;
  height: 34px;
  background: #6b7fc0;
}
.group-lane {
  height: 72px;
  background: #353535;
}
.key-lane {
  background: #353535;
}
.strip {
  position: absolute;
  height: 6px;
}
.key-lane .strip {
  height: 8px;
}
.veil {
  position: absolute;
  top: 0;
  bottom: 0;
  width: 2px;
  background: rgba(20, 20, 20, 0.3);
}
.drop {
  position: relative;
  height: 330px;
  border-bottom: 6px solid #171717;
}
.drop p {
  position: absolute;
  top: 151px;
  transform: translateX(-50%);
  color: #dadada;
  font-weight: 500;
  white-space: nowrap;
}
.marker {
  position: absolute;
  top: 26px;
  bottom: 0;
  width: 2px;
  background: #a3a3a3;
}
.times {
  position: relative;
  height: 34px;
  background: linear-gradient(to top right, #56b5cf 50%, transparent 50%) 0 2px / 8px 8px no-repeat;
}
.second {
  position: absolute;
  top: 0;
  width: 2px;
  height: 4px;
  background: #777;
}
.second.major {
  width: 4px;
  height: 16px;
  padding-left: 6px;
  color: #a2a2a2;
  line-height: 30px;
  background: linear-gradient(#777, #777) 0 100% / 4px 2px no-repeat, linear-gradient(#777, #777) 0 0 / 2px 16px no-repeat;
}

.rack {
  display: flex;
  gap: 6px;
  height: 392px;
  margin: 16px 0 0 14px;
  padding: 8px 0 8px 10px;
  overflow: hidden;
  background: #191919;
  border-radius: 8px 0 0 8px;
}
.meter {
  flex: none;
  width: 10px;
  height: 80px;
  margin-top: 148px;
  background: linear-gradient(#555, #555) 0 8px / 10px 2px no-repeat, linear-gradient(90deg, #060606 4px, transparent 4px 6px, #060606 6px);
}
.meter.first {
  margin-right: 4px;
}
.device {
  flex: none;
  height: 376px;
  overflow: hidden;
  background: #363636;
  border-radius: 8px;
}
.doubler {
  width: 546px;
}
.delay {
  width: 742px;
}
.reverb {
  width: 1024px;
  background: #4a4a4a;
}
.empty {
  flex: 1;
  background: #363636;
}
.head {
  display: flex;
  align-items: center;
  gap: 6px;
  height: 34px;
  padding: 0 6px;
  background: #4a4a4a;
}
.head.mapped {
  background: #4e6a78;
}
.head h2 {
  padding-left: 3px;
  color: #dcdcdc;
  font-weight: 600;
}
.head.mapped h2 {
  color: #0c0c0c;
  font-weight: 500;
}
.power,
.fold {
  display: flex;
  align-items: center;
  justify-content: center;
  width: 26px;
  height: 26px;
  border-radius: 50%;
  border: 2px solid #060606;
}
.power {
  background: #f59421;
}
.fold {
  background: #444;
}
.rack :deep(.head-icons) {
  display: flex;
  gap: 6px;
  margin-left: auto;
}
.rack :deep(svg) {
  display: block;
}
.rack :deep(.dial) {
  display: flex;
  flex: none;
  flex-direction: column;
  align-items: center;
  width: 52px;
  height: 100px;
  color: #dcdcdc;
  font-weight: 500;
  line-height: 24px;
  white-space: nowrap;
}
.rack :deep(.dial-face) {
  position: relative;
  width: 52px;
  height: 48px;
}
.rack :deep(.dial-face input) {
  position: absolute;
  inset: 0;
  width: 52px;
  height: 48px;
  margin: 0;
  opacity: 0;
}
.display {
  background: #040404;
  border-radius: 6px;
}
.btn {
  display: flex;
  align-items: center;
  justify-content: center;
  height: 26px;
  background: #454545;
  border: 2px solid #0b0b0b;
  color: #c6c6c6;
  line-height: 22px;
  white-space: nowrap;
}
.btn.on {
  background: #f59421;
  color: #161616;
}
.btn.solid {
  background: #f59421;
  border-color: #f59421;
  color: #161616;
}
.btn.line {
  background: none;
  border-color: #e09a4c;
  color: #e09a4c;
}
.btn.cyan {
  background: none;
  border-color: #56b5cf;
  color: #56b5cf;
}
.wire {
  flex: none;
  width: 16px;
  height: 2px;
  background: #191919;
}
.wire.long {
  width: 24px;
}
.dim {
  color: #858585;
}
.amber-text {
  color: #e09a4c;
}
.cyan-text {
  color: #56b5cf;
}
.display b {
  color: #e09a4c;
  font-weight: 400;
}

.doubler-body {
  display: flex;
}
.doubler-main {
  width: 426px;
  padding: 8px 0 0 8px;
}
.xy {
  height: 218px;
  padding: 47px 8px 0;
}
.dots {
  margin: 0 auto;
}
.modes {
  display: grid;
  grid-template-columns: repeat(3, 1fr);
  gap: 6px;
  margin-top: 41px;
}
.time-field {
  display: grid;
  width: 130px;
  margin: 10px 0 0 auto;
  line-height: 28px;
}
.time-field .amber-text {
  padding-left: 4px;
}
.doubler-row {
  display: flex;
  align-items: center;
  justify-content: space-between;
  margin-top: 9px;
  padding: 0 16px 0 8px;
}
.cluster {
  display: flex;
  align-items: center;
  gap: 8px;
}
.stack {
  display: grid;
  gap: 6px;
  width: 38px;
}
.phase {
  width: 30px;
}
.doubler-side {
  display: grid;
  flex: 1;
  align-content: start;
  gap: 12px;
  padding-top: 10px;
}
.doubler-side div {
  display: flex;
  justify-content: center;
  border-left: 2px solid transparent;
}
.doubler-side .split {
  border-color: #191919;
}

.delay-body {
  display: flex;
  gap: 12px;
  padding: 0 12px;
}
.delay-times {
  width: 234px;
  padding-top: 6px;
}
.sides {
  display: flex;
}
.side {
  display: flex;
  flex-direction: column;
  gap: 6px;
  width: 94px;
}
.cap {
  height: 24px;
  color: #dcdcdc;
  font-weight: 500;
  line-height: 30px;
  text-align: center;
}
.cap.start {
  text-align: left;
}
.divisions {
  display: grid;
  grid-template-columns: 1fr 1fr;
  gap: 6px;
}
.offset {
  display: flex;
  align-items: center;
  height: 26px;
  background: #1c1c1c;
  border: 2px solid #0b0b0b;
}
.offset input {
  width: 78px;
  height: 22px;
  padding-left: 14px;
  color: #dcdcdc;
  text-align: center;
}
.link-col {
  display: flex;
  flex-direction: column;
  align-items: center;
  gap: 8px;
  width: 46px;
  padding-top: 30px;
}
.link-col i {
  width: 2px;
  height: 72px;
  background: #191919;
}
.link-col .btn {
  width: 34px;
}
.delay-feedback {
  display: flex;
  align-items: center;
  justify-content: flex-end;
  gap: 10px;
  margin-top: 13px;
}
.freeze {
  width: 46px;
  height: 30px;
}
.filter {
  width: 350px;
  height: 326px;
  margin-top: 8px;
  overflow: hidden;
}
.filter-row {
  display: flex;
  align-items: center;
  height: 44px;
  padding: 0 18px 0 12px;
  color: #858585;
}
.filter-row label {
  display: flex;
  align-items: center;
  gap: 12px;
}
.filter-row label input {
  width: 18px;
  height: 18px;
  background: #f59421;
}
.filter-row b {
  margin-left: 8px;
}
.filter-row .width {
  margin-left: auto;
}
.rule {
  display: flex;
  align-items: center;
  gap: 7px;
  height: 30px;
  color: #858585;
}
.rule i {
  flex: 1;
  height: 2px;
  background: #484848;
}
.mods {
  display: grid;
  grid-template-columns: repeat(3, 1fr);
  padding: 0 20px 0 15px;
  color: #858585;
  line-height: 29px;
  text-align: center;
}
.delay-mode {
  display: flex;
  flex-direction: column;
  gap: 6px;
  width: 110px;
  padding-top: 6px;
}
.pong {
  margin-top: 30px;
}
.mode-dial {
  display: flex;
  justify-content: center;
  margin-top: 41px;
}

.reverb-body {
  display: flex;
  gap: 4px;
  height: 342px;
  padding: 0 4px 4px;
}
.reverb-main {
  display: grid;
  grid-template-rows: 230px 104px;
  gap: 4px;
}
.reverb-grid {
  display: grid;
  grid-template-columns: 204px 198px 382px 106px;
  gap: 4px;
}
.bottom,
.reverb-side {
  background: #363636;
  border-radius: 6px;
}
.block {
  display: flex;
  flex-direction: column;
  padding: 0 8px;
  color: #858585;
}
.block h3 {
  display: flex;
  gap: 5px;
  height: 40px;
  color: #bcbcbc;
  font-weight: 600;
  line-height: 42px;
  white-space: nowrap;
}
.block h3 i {
  flex: 1;
  height: 2px;
  margin-top: 26px;
  background: #4a4a4a;
}
.pair {
  display: grid;
  grid-template-columns: 90px 90px;
  gap: 8px;
  margin-bottom: 8px;
}
.values {
  display: flex;
  justify-content: space-between;
  padding: 0 6px;
  line-height: 42px;
}
.early h3 {
  justify-content: center;
}
.early .btn {
  width: 82px;
  margin: 22px auto 14px;
}
.two {
  display: grid;
  grid-template-columns: 1fr 1fr;
  line-height: 26px;
  text-align: center;
}
.shape {
  height: 44px;
  margin-top: auto;
  border-top: 2px solid #222;
  line-height: 42px;
}
.diffusion {
  display: flex;
  gap: 8px;
}
.diffusion-left {
  display: grid;
  gap: 8px;
  width: 268px;
}
.bandrow {
  display: flex;
  align-items: center;
  gap: 8px;
  height: 26px;
  padding-right: 5px;
}
.freq {
  margin-left: 4px;
}
.freq.low {
  margin-left: 54px;
}
.res {
  margin-left: auto;
}
.pairs {
  display: grid;
  flex: 1;
  align-content: start;
  padding-top: 28px;
  line-height: 26px;
  text-align: center;
}
.pairs .next {
  margin-top: 18px;
}
.chorus {
  padding-top: 8px;
}
.chorus .pairs {
  padding-top: 34px;
}
.mid,
.smooth,
.tail {
  display: flex;
  align-items: center;
}
.mid {
  justify-content: center;
}
.smooth {
  gap: 6px;
  padding-left: 10px;
}
.tail {
  justify-content: space-between;
  padding: 0 41px 0 28px;
}
.freezers {
  display: grid;
  grid-template-columns: 48px 48px;
  gap: 6px;
}
.freezers .full {
  grid-column: span 2;
}
.choice {
  display: grid;
  align-self: center;
  padding-bottom: 12px;
  color: #dcdcdc;
  font-weight: 500;
  line-height: 26px;
}
.pickbox {
  display: flex;
  align-items: center;
  position: relative;
  height: 26px;
  background: #1c1c1c;
  border: 2px solid #0b0b0b;
}
.pickbox select {
  width: 100%;
  padding-left: 2px;
}
.pickbox svg {
  position: absolute;
  right: 2px;
  pointer-events: none;
}
.reverb-side {
  display: flex;
  flex-direction: column;
  align-items: center;
  gap: 12px;
  width: 110px;
  padding-top: 7px;
}

.status {
  display: flex;
  gap: 16px;
  padding: 16px 0 12px 14px;
}
.status .knob {
  margin-top: 2px;
}
.infobar {
  flex: 1;
  height: 44px;
  background: #363636;
  border: 6px solid #191919;
  border-radius: 8px;
}
.tail-box {
  flex: 0 0 24px;
  border-right: 0;
  border-radius: 8px 0 0 8px;
}
</style>
